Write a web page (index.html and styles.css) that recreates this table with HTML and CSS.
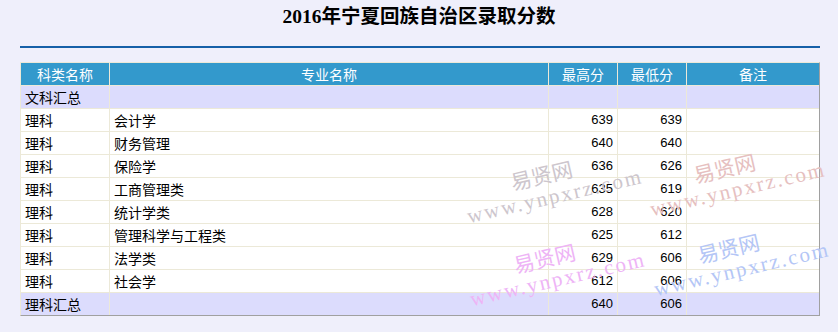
FILE: index.html
```html
<!DOCTYPE html>
<html lang="zh-CN">
<head>
<meta charset="utf-8">
<title>2016年宁夏回族自治区录取分数</title>
<link rel="stylesheet" href="styles.css">
</head>
<body>
<div class="page">
  <h1 class="title">2016年宁夏回族自治区录取分数</h1>
  <div class="rule"></div>
  <table class="scores">
    <colgroup>
      <col class="c1"><col class="c2"><col class="c3"><col class="c4"><col class="c5">
    </colgroup>
    <thead>
      <tr><th>科类名称</th><th>专业名称</th><th>最高分</th><th>最低分</th><th class="last">备注</th></tr>
    </thead>
    <tbody>
      <tr class="sum"><td>文科汇总</td><td></td><td class="num"></td><td class="num"></td><td class="last"></td></tr>
      <tr><td>理科</td><td>会计学</td><td class="num">639</td><td class="num">639</td><td class="last"></td></tr>
      <tr><td>理科</td><td>财务管理</td><td class="num">640</td><td class="num">640</td><td class="last"></td></tr>
      <tr><td>理科</td><td>保险学</td><td class="num">636</td><td class="num">626</td><td class="last"></td></tr>
      <tr><td>理科</td><td>工商管理类</td><td class="num">635</td><td class="num">619</td><td class="last"></td></tr>
      <tr><td>理科</td><td>统计学类</td><td class="num">628</td><td class="num">620</td><td class="last"></td></tr>
      <tr><td>理科</td><td>管理科学与工程类</td><td class="num">625</td><td class="num">612</td><td class="last"></td></tr>
      <tr><td>理科</td><td>法学类</td><td class="num">629</td><td class="num">606</td><td class="last"></td></tr>
      <tr><td>理科</td><td>社会学</td><td class="num">612</td><td class="num">606</td><td class="last"></td></tr>
      <tr class="sum end"><td>理科汇总</td><td></td><td class="num">640</td><td class="num">606</td><td class="last"></td></tr>
    </tbody>
  </table>

  <div class="wm wm-gray"><div class="cn">易贤网</div><div class="en">www.ynpxrz.com</div></div>
  <div class="wm wm-red"><div class="cn">易贤网</div><div class="en">www.ynpxrz.com</div></div>
  <div class="wm wm-pink"><div class="cn">易贤网</div><div class="en">www.ynpxrz.com</div></div>
  <div class="wm wm-blue"><div class="cn">易贤网</div><div class="en">www.ynpxrz.com</div></div>
</div>
</body>
</html>
```
FILE: styles.css
```css
html, body {
  margin: 0;
  padding: 0;
  background: #efeffb;
}

.page {
  position: relative;
  width: 838px;
  height: 332px;
  overflow: hidden;
  display: flex;
  flex-direction: column;
  align-items: flex-start;
  padding-left: 20px;
  box-sizing: border-box;
}

.title {
  margin: 5px 0 0 -20px;
  width: 838px;
  text-align: center;
  font-family: "Liberation Serif", "Noto Sans CJK SC", serif;
  font-size: 19.5px;
  line-height: 24px;
  font-weight: bold;
  color: #000;
}

.rule {
  margin-top: 17px;
  width: 800px;
  height: 2px;
  background: #1660a8;
}

.scores {
  margin-top: 14px;
  width: 800px;
  table-layout: fixed;
  border-collapse: separate;
  border-spacing: 0;
  border-top: 1px solid #ece9d8;
  border-left: 1px solid #ece9d8;
  border-right: 1px solid #a0a0a0;
  border-bottom: 1px solid #a0a0a0;
  font-family: "Noto Sans CJK SC", "Liberation Sans", sans-serif;
  font-size: 14px;
  color: #000;
}

.c1 { width: 89px; }
.c2 { width: 439px; }
.c3 { width: 69px; }
.c4 { width: 69px; }
.c5 { width: auto; }

.scores th,
.scores td {
  height: 22px;
  padding: 0 4px;
  line-height: 22px;
  border-right: 1px solid #ece9d8;
  border-bottom: 1px solid #ece9d8;
  white-space: nowrap;
  overflow: hidden;
}

.scores th {
  background: #3399cc;
  color: #fff;
  font-weight: normal;
  text-align: center;
}

.scores td {
  background: #fff;
  text-align: left;
}

.scores .last { border-right: none; }

.scores tr.sum td { background: #dcdcfd; }
.scores tr.end td { border-bottom: none; }

.scores td.num {
  text-align: right;
  font-family: "Liberation Sans", sans-serif;
  font-size: 13px;
}

/* watermarks */
.wm {
  position: absolute;
  height: 48px;
  line-height: 24px;
  transform: rotate(-13deg);
  transform-origin: 0 100%;
  pointer-events: none;
  white-space: nowrap;
}
.wm .cn {
  padding-left: 50px;
  font-family: "Noto Sans CJK SC", serif;
  font-size: 21px;
}
.wm .en {
  font-family: "Liberation Serif", serif;
  font-size: 21px;
  letter-spacing: 2.2px;
}
.wm-gray { left: 470px; top: 180px; color: #cdc6cd; }
.wm-red  { left: 653px; top: 173px; color: #e6c0c0; }
.wm-pink { left: 473px; top: 263px; color: #eeb4f6; }
.wm-blue { left: 657px; top: 253px; color: #b4c6f6; }
```
